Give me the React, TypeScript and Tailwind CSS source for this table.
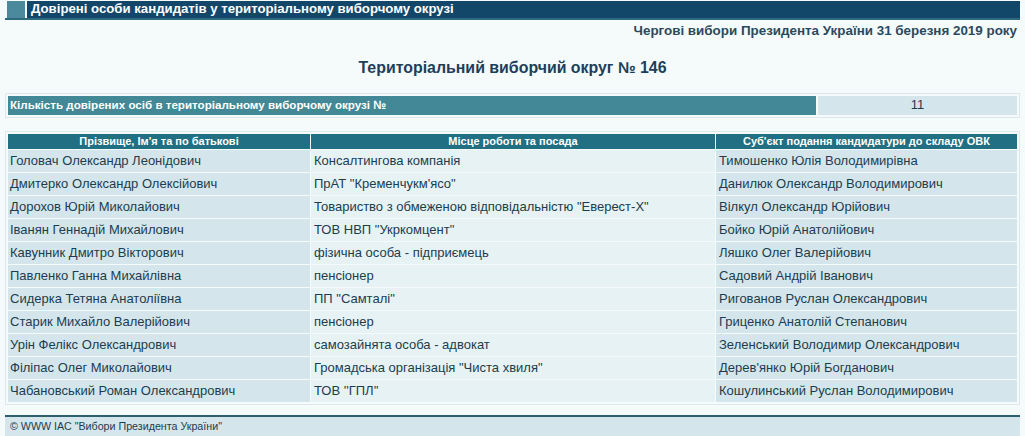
const rows = [
  ["Головач Олександр Леонідович", "Консалтингова компанія", "Тимошенко Юлія Володимирівна"],
  ["Дмитерко Олександр Олексійович", "ПрАТ \"Кременчукм'ясо\"", "Данилюк Олександр Володимирович"],
  ["Дорохов Юрій Миколайович", "Товариство з обмеженою відповідальністю \"Еверест-Х\"", "Вілкул Олександр Юрійович"],
  ["Іванян Геннадій Михайлович", "ТОВ НВП \"Укркомцент\"", "Бойко Юрій Анатолійович"],
  ["Кавунник Дмитро Вікторович", "фізична особа - підприємець", "Ляшко Олег Валерійович"],
  ["Павленко Ганна Михайлівна", "пенсіонер", "Садовий Андрій Іванович"],
  ["Сидерка Тетяна Анатоліївна", "ПП \"Самталі\"", "Ригованов Руслан Олександрович"],
  ["Старик Михайло Валерійович", "пенсіонер", "Гриценко Анатолій Степанович"],
  ["Урін Фелікс Олександрович", "самозайнята особа - адвокат", "Зеленський Володимир Олександрович"],
  ["Філіпас Олег Миколайович", "Громадська організація \"Чиста хвиля\"", "Дерев'янко Юрій Богданович"],
  ["Чабановський Роман Олександрович", "ТОВ ''ГПЛ''", "Кошулинський Руслан Володимирович"],
]

export default function App() {
  return (
    <div className="h-[436px] overflow-hidden bg-[#f5fafb] font-['Liberation_Sans',Arial,sans-serif] leading-tight text-[#1c3d4f]">
      {/* page title bar */}
      <div className="mx-[5px] border-b-2 border-[#2d6a80] pt-px">
        <div className="flex h-[17px] items-stretch">
          <div className="mx-[2px] w-[18px] bg-[#4a8a9c]" />
          <div className="flex flex-1 items-center bg-[#12476a] pl-[4px] text-[13.2px] font-bold text-white">
            Довірені особи кандидатів у територіальному виборчому окрузі
          </div>
        </div>
      </div>

      <div className="flex h-[22px] items-center justify-end pr-[8px] text-[13.4px] font-bold text-[#2a4a5e]">
        Чергові вибори Президента України 31 березня 2019 року
      </div>

      <h1 className="mt-[16px] flex h-[20px] items-center justify-center text-[15.9px] font-bold text-[#1d3f5a]">
        Територіальний виборчий округ № 146
      </h1>

      <div className="mx-[5px] mt-[15px] flex h-[25px] gap-[2px] border border-[#dce8ec] p-[2px]">
        <div className="flex flex-1 items-center bg-[#428896] pl-[2px] text-[11.6px] font-bold text-white">
          Кількість довірених осіб в територіальному виборчому окрузі №
        </div>
        <div className="flex w-[199px] items-center justify-center bg-[#d4e6eb] text-[13px]">11</div>
      </div>

      <div className="mx-[5px] mt-[13px] border border-[#dce8ec] p-px">
        <table className="w-full border-separate border-spacing-[1px] text-[13px]">
          <colgroup>
            <col className="w-[302px]" />
            <col className="w-[404px]" />
            <col />
          </colgroup>
          <thead>
            <tr className="h-[15px] bg-[#216f82] text-[11px] text-white">
              <th className="p-0 font-bold">Прізвище, Ім'я та по батькові</th>
              <th className="p-0 font-bold">Місце роботи та посада</th>
              <th className="p-0 font-bold">Суб'єкт подання кандидатури до складу ОВК</th>
            </tr>
          </thead>
          <tbody>
            {rows.map((r) => (
              <tr key={r[0]} className="h-[22px]">
                <td className="bg-[#d4e6eb] pl-[2px]">{r[0]}</td>
                <td className="bg-[#e6f2f3] pl-[3px]">{r[1]}</td>
                <td className="bg-[#d4e6eb] pl-[3px]">{r[2]}</td>
              </tr>
            ))}
          </tbody>
        </table>
      </div>

      <div className="mx-[5px] mt-[10px] flex h-[21px] items-center border-t-2 border-[#2d5f6e] bg-[#d4e6eb] pl-[5px] text-[10.7px]">
        © WWW ІАС "Вибори Президента України"
      </div>
    </div>
  )
}
